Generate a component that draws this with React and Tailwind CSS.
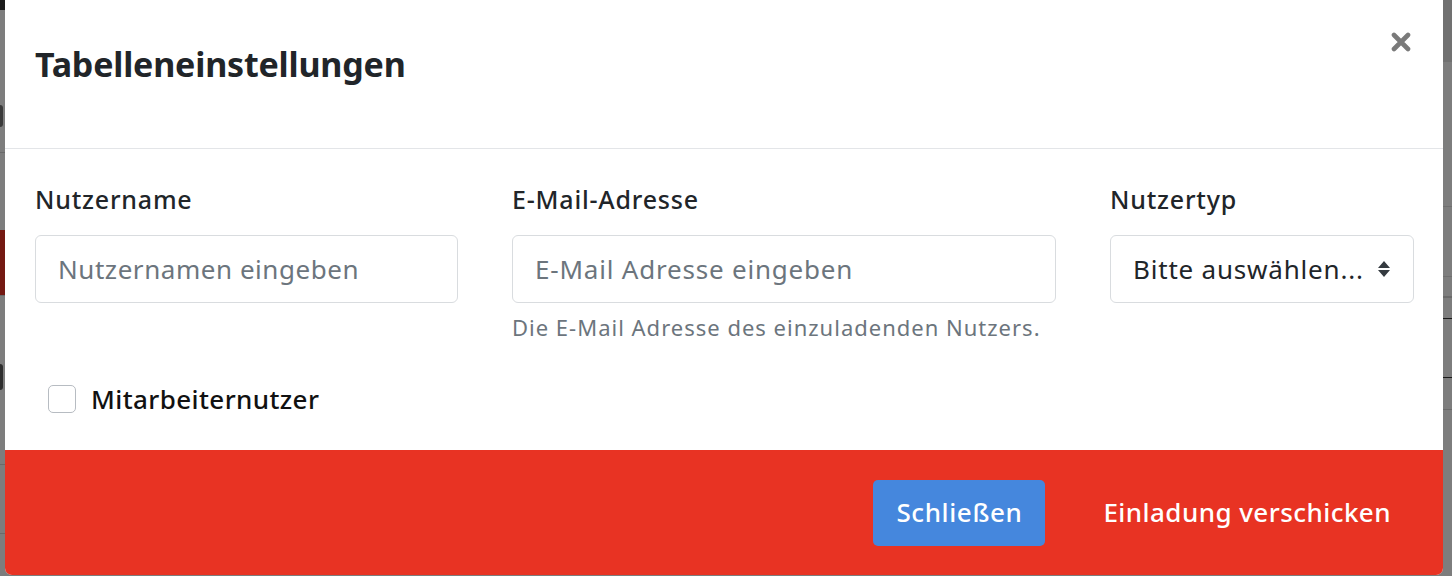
import React from "react";

const font = { fontFamily: '"Noto Sans", "Open Sans", sans-serif' };

function Field({ label, width, children, help }) {
  return (
    <div className="shrink-0" style={{ width }}>
      <label className="block text-[25px] leading-[34px] font-medium tracking-[0.8px] text-[#212529]">
        {label}
      </label>
      {children}
      {help && (
        <div className="mt-[9px] text-[22px] leading-[30px] tracking-[1px] text-[#6c757d]">{help}</div>
      )}
    </div>
  );
}

export default function App() {
  return (
    <div className="flex w-[1452px] h-[576px] overflow-hidden bg-[#7d7d7d]" style={font}>
      {/* left background strip */}
      <div className="w-[5px] shrink-0 flex flex-col">
        <div className="h-[10px] bg-[#1c1c1c]" />
        <div className="h-[95px]" />
        <div className="h-[22px] w-[3px] bg-[#3a3a3a] rounded-r" />
        <div className="h-[25px]" />
        <div className="h-px bg-[#6a6a6a]" />
        <div className="h-[77px]" />
        <div className="h-[65px] bg-[#741912]" />
        <div className="h-px bg-[#6a6a6a]" />
        <div className="h-[68px]" />
        <div className="h-[26px] w-[3px] bg-[#2e2e2e] rounded-r" />
        <div className="h-[74px]" />
        <div className="h-px bg-[#6a6a6a]" />
        <div className="h-[68px]" />
        <div className="h-px bg-[#6a6a6a]" />
      </div>

      {/* modal */}
      <div className="w-[1438px] shrink-0 h-[575px] flex flex-col bg-white rounded-b-[7px] overflow-hidden">
        <div className="h-[149px] shrink-0 border-b border-[#e3e5e8] flex items-start justify-between pl-[30px] pr-[31px] pt-[40px]">
          <h1 className="text-[34px] leading-[48px] font-bold text-[#212529] tracking-[-0.2px]">
            Tabelleneinstellungen
          </h1>
          <button className="-mt-[9px] w-[22px] h-[22px] flex items-center justify-center">
            <svg width="20" height="20" viewBox="0 0 20 20">
              <path d="M3 3 L17 17 M17 3 L3 17" stroke="#7a7a7a" strokeWidth="4.6" strokeLinecap="round" />
            </svg>
          </button>
        </div>

        <div className="h-[301px] shrink-0 px-[30px] pt-[33px]">
          <div className="flex gap-x-[54px]">
            <Field label="Nutzername" width={423}>
              <div className="mt-[19px] h-[68px] rounded-[6px] border border-[#d9dcdf] flex items-center px-[22px] text-[26px] tracking-[0.55px] text-[#6c757d]">
                Nutzernamen eingeben
              </div>
            </Field>
            <Field label="E-Mail-Adresse" width={544} help="Die E-Mail Adresse des einzuladenden Nutzers.">
              <div className="mt-[19px] h-[68px] rounded-[6px] border border-[#d9dcdf] flex items-center px-[22px] text-[26px] tracking-[0.8px] text-[#6c757d]">
                E-Mail Adresse eingeben
              </div>
            </Field>
            <Field label="Nutzertyp" width={304}>
              <div className="mt-[19px] h-[68px] rounded-[6px] border border-[#d9dcdf] flex items-center justify-between pl-[22px] pr-[22px] text-[26px] tracking-[0.8px] text-[#212529]">
                <span>Bitte auswählen...</span>
                <svg width="14" height="18" viewBox="0 0 14 18" className="shrink-0">
                  <path d="M7 1 L13 8 H1 Z M7 17 L13 10 H1 Z" fill="#343a40" />
                </svg>
              </div>
            </Field>
          </div>
          <div className="mt-[40px] ml-[13px] flex items-center gap-[15px]">
            <span className="w-[28px] h-[28px] rounded-[5px] border border-[#b7bcc2] bg-white" />
            <span className="text-[26px] leading-[34px] font-medium tracking-[0.4px] text-[#111]">
              Mitarbeiternutzer
            </span>
          </div>
        </div>

        <div className="flex-1 bg-[#e83323] flex items-center justify-end pr-[29px] gap-[35px]">
          <button className="h-[66px] px-[23px] rounded-[5px] bg-[#4587dd] text-white text-[26px] font-medium tracking-[0.6px]">
            Schließen
          </button>
          <button className="h-[66px] px-[23px] rounded-[5px] text-white text-[26px] font-medium tracking-[0.45px]">
            Einladung verschicken
          </button>
        </div>
      </div>

      {/* right background strip */}
      <div className="w-[9px] shrink-0 flex flex-col">
        <div className="h-[62px] bg-[#717171]" />
        <div className="h-[144px]" />
        <div className="h-px bg-[#6f6f6f]" />
        <div className="h-[69px]" />
        <div className="h-px bg-[#6f6f6f]" />
        <div className="h-[19px]" />
        <div className="h-[2px] bg-[#6a6a6a]" />
        <div className="h-[20px]" />
        <div className="h-px bg-[#1a1a1a]" />
        <div className="h-[58px]" />
        <div className="h-px bg-[#1a1a1a]" />
        <div className="h-[31px]" />
        <div className="h-px bg-[#6a6a6a]" />
      </div>
    </div>
  );
}
